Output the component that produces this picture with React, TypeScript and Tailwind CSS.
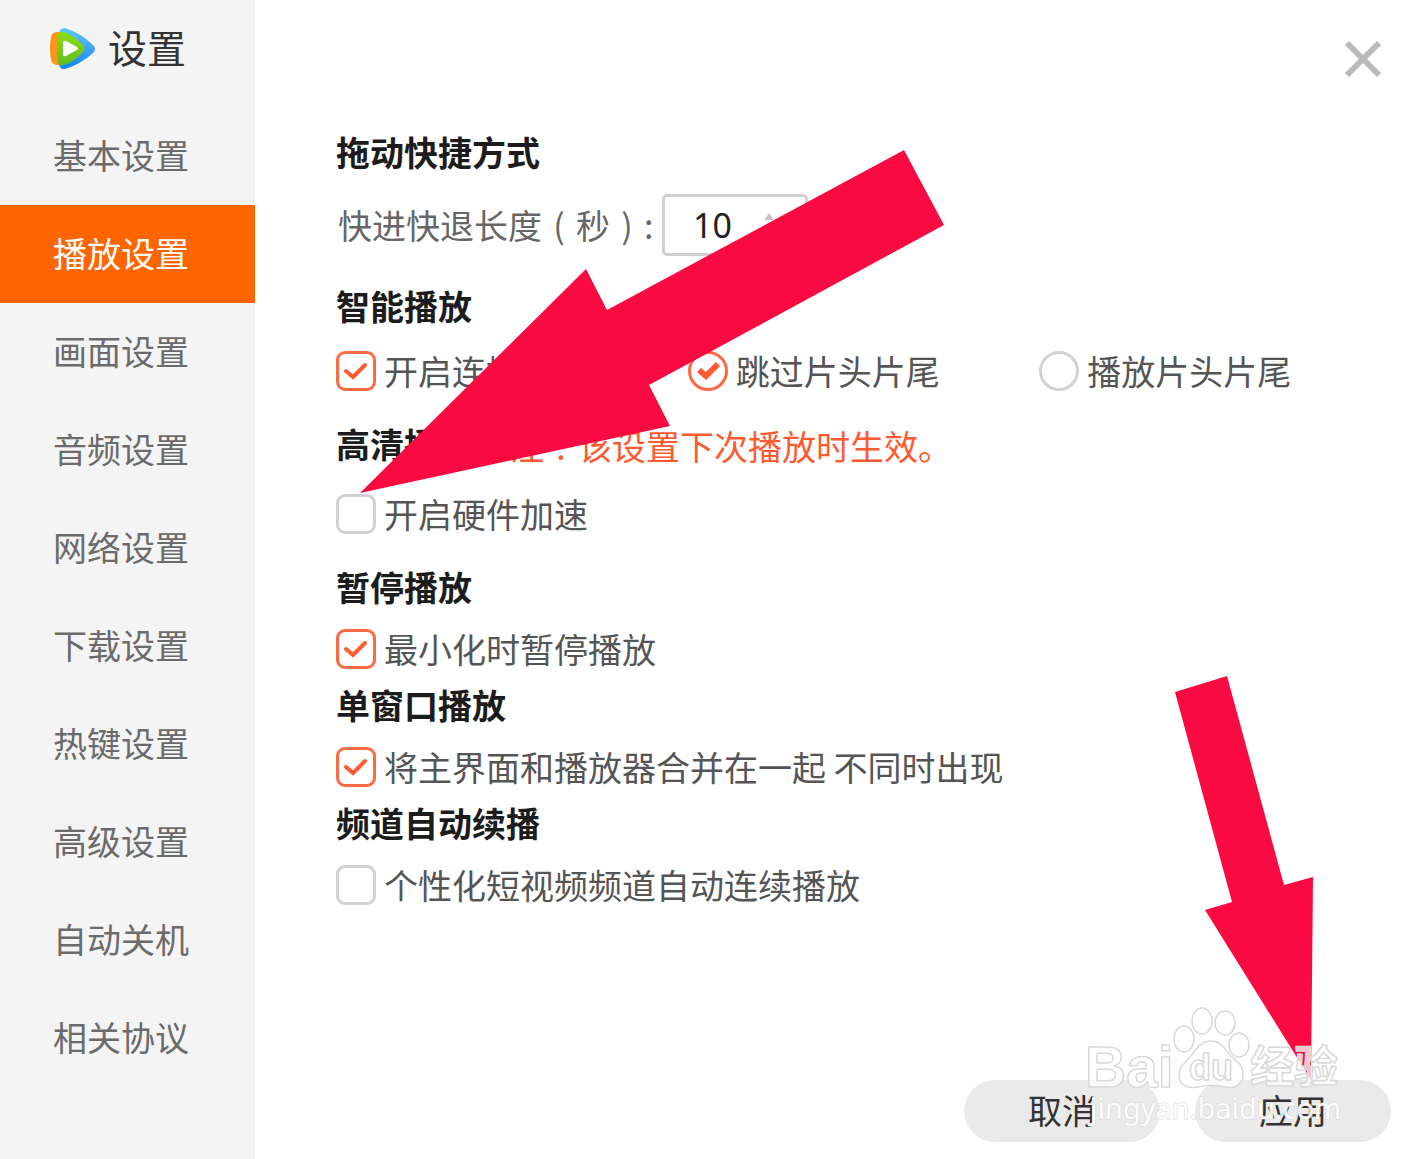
import { useState, type ReactNode } from "react";

const menu = [
  "基本设置",
  "播放设置",
  "画面设置",
  "音频设置",
  "网络设置",
  "下载设置",
  "热键设置",
  "高级设置",
  "自动关机",
  "相关协议",
];

function Logo() {
  return (
    <svg viewBox="0 0 46 42" className="h-[42px] w-[46px]" aria-hidden="true">
      <defs>
        <linearGradient id="logo-blue" x1="0" y1="0" x2="0" y2="1">
          <stop offset="0" stopColor="#5ccbfb" />
          <stop offset="0.5" stopColor="#3fa2f7" />
          <stop offset="1" stopColor="#0f86f2" />
        </linearGradient>
        <linearGradient id="logo-green" x1="0" y1="0" x2="0" y2="1">
          <stop offset="0" stopColor="#8fdc12" />
          <stop offset="1" stopColor="#62bd1c" />
        </linearGradient>
      </defs>
      <path d="M1 9Q2 4 8 4L14 4V37L8 37Q2 37 1 32Q-1 20 1 9Z" fill="#ff9518" />
      <path
        d="M9 5Q10 0 15 0Q31 5 43 17Q47 21 43 25Q31 36 15 41Q10 42 9 36Q6 21 9 5Z"
        fill="url(#logo-blue)"
      />
      <path
        d="M8 6Q10 3 14 4Q25 8 33 17Q36 21 33 24Q25 33 14 37Q10 38 8 35Q6 21 8 6Z"
        fill="url(#logo-green)"
      />
      <path
        d="M13 15Q13 12 16 13L27 19Q29 21 27 22L16 28Q13 29 13 26Z"
        fill="#fff"
      />
    </svg>
  );
}

type OptionProps = {
  label: string;
  type?: "checkbox" | "radio";
  name?: string;
  defaultChecked?: boolean;
};

function Option({
  label,
  type = "checkbox",
  name,
  defaultChecked,
}: OptionProps) {
  const radio = type === "radio";
  return (
    <label className="flex items-center gap-2 text-[34px] leading-10 text-[#555]">
      <span className="grid size-10 shrink-0">
        <input
          type={type}
          name={name}
          defaultChecked={defaultChecked}
          className={`peer col-start-1 row-start-1 size-10 appearance-none border-3 border-[#d2d2d2] bg-white checked:border-[#ff6a45] ${
            radio ? "rounded-full" : "rounded-[9px]"
          }`}
        />
        <svg
          viewBox="0 0 40 40"
          fill="none"
          stroke="#ff5a30"
          strokeWidth={radio ? 6 : 4}
          className="pointer-events-none invisible col-start-1 row-start-1 size-10 peer-checked:visible"
          aria-hidden="true"
        >
          <path
            d={radio ? "M11 19L18 25L30 13" : "M10 20L17 26L29 14"}
            strokeLinecap={radio ? "butt" : "round"}
          />
        </svg>
      </span>
      <span>{label}</span>
    </label>
  );
}

function Heading({ children }: { children: ReactNode }) {
  return (
    <h2 className="pb-1 text-[34px] leading-9 font-bold text-[#1c1c1c]">
      {children}
    </h2>
  );
}

// Full-width cell with its mark in the middle
function Mark({ children }: { children: string }) {
  return (
    <span className="inline-block w-[34px] text-center">{children}</span>
  );
}

function Watermark() {
  return (
    <svg
      viewBox="0 0 260 130"
      className="pointer-events-none absolute right-[73px] bottom-[26px] h-[130px] w-[260px]"
      aria-hidden="true"
    >
      <g
        fill="#fff"
        fillOpacity="0.75"
        stroke="#d9d9d9"
        strokeWidth="1.5"
        strokeLinejoin="round"
      >
        <ellipse cx="100" cy="36" rx="10" ry="13" />
        <ellipse cx="118" cy="18" rx="10" ry="13" />
        <ellipse cx="141" cy="20" rx="10" ry="12" />
        <ellipse cx="155" cy="42" rx="10" ry="12" />
        <path d="M127 38C138 38 141 47 147 53C154 59 160 63 159 73C158 82 150 86 141 84C132 82 123 82 114 84C104 86 95 82 95 73C95 63 101 60 107 53C112 47 116 38 127 38Z" />
        <text
          x="1"
          y="84"
          className="font-['Liberation_Sans'] text-[57px] font-bold"
        >
          Bai
        </text>
        <text
          x="105"
          y="77"
          className="font-['Liberation_Sans'] text-[36px] font-bold"
        >
          du
        </text>
        <text
          x="166"
          y="80"
          className="font-['Noto_Sans_CJK_SC'] text-[44px] font-bold"
        >
          经验
        </text>
      </g>
      <text
        x="6"
        y="116"
        fill="#fff"
        fillOpacity="0.9"
        stroke="#d9d9d9"
        strokeWidth="1"
        paintOrder="stroke"
        className="font-['Noto_Sans'] text-[29px]"
      >
        jingyan.baidu.com
      </text>
    </svg>
  );
}

export default function App() {
  const [active, setActive] = useState("播放设置");
  const [seconds, setSeconds] = useState("10");

  return (
    <div className="relative flex min-h-screen bg-white font-['Noto_Sans_CJK_SC',sans-serif]">
      <aside className="w-[255px] shrink-0 bg-[#f4f4f4]">
        <div className="flex h-[107px] items-start gap-3 pt-7 pl-[50px]">
          <Logo />
          <h1 className="text-[39px] leading-9 text-[#333]">设置</h1>
        </div>
        <nav>
          {menu.map((item) => (
            <button
              key={item}
              type="button"
              onClick={() => setActive(item)}
              className={`block h-[98px] w-full pb-1 pl-[53px] text-left text-[34px] ${
                item === active ? "bg-[#ff6600] text-white" : "text-[#6b6b6b]"
              }`}
            >
              {item}
            </button>
          ))}
        </nav>
      </aside>

      <main className="flex flex-1 flex-col pr-[26px] pb-[17px] pl-[81px]">
        <div className="flex h-[134px] justify-end pt-10 pr-2">
          <button type="button" aria-label="关闭" className="size-10">
            <svg
              viewBox="0 0 40 40"
              stroke="#bababa"
              strokeWidth="6"
              className="size-10"
            >
              <path d="M4 3L36 35M36 3L4 35" />
            </svg>
          </button>
        </div>

        <section>
          <Heading>拖动快捷方式</Heading>
          <div className="mt-5 flex h-[62px] items-center">
            <label
              htmlFor="step"
              className="w-[326px] pl-[2px] text-[34px] leading-10 whitespace-nowrap text-[#666]"
            >
              快进快退长度<Mark>(</Mark>秒<Mark>)</Mark>:
            </label>
            <div className="relative">
              <input
                id="step"
                type="text"
                inputMode="numeric"
                value={seconds}
                onChange={(e) => setSeconds(e.target.value)}
                className="h-[62px] w-[146px] rounded-[5px] border-3 border-[#d0d0d0] pl-7 font-['Noto_Sans'] text-[34px] text-[#222]"
              />
              <svg
                viewBox="0 0 20 40"
                fill="#c4c4c4"
                className="pointer-events-none absolute top-3 right-7 h-10 w-5"
                aria-hidden="true"
              >
                <path d="M4 14L9 7L14 14ZM4 26L9 33L14 26Z" />
              </svg>
            </div>
          </div>
        </section>

        <section className="mt-8">
          <Heading>智能播放</Heading>
          <div className="mt-[23px] grid grid-cols-3">
            <Option label="开启连播" defaultChecked />
            <Option
              type="radio"
              name="intro"
              label="跳过片头片尾"
              defaultChecked
            />
            <Option type="radio" name="intro" label="播放片头片尾" />
          </div>
        </section>

        <section className="mt-[35px]">
          <div className="flex items-center gap-[38px]">
            <Heading>高清播放</Heading>
            <p className="text-[34px] leading-10 text-[#ff5a30]">
              注<Mark>:</Mark>该设置下次播放时生效。
            </p>
          </div>
          <div className="mt-7">
            <Option label="开启硬件加速" />
          </div>
        </section>

        <section className="mt-[35px]">
          <Heading>暂停播放</Heading>
          <div className="mt-5">
            <Option label="最小化时暂停播放" defaultChecked />
          </div>
        </section>

        <section className="mt-[18px]">
          <Heading>单窗口播放</Heading>
          <div className="mt-5">
            <Option
              label="将主界面和播放器合并在一起 不同时出现"
              defaultChecked
            />
          </div>
        </section>

        <section className="mt-[18px]">
          <Heading>频道自动续播</Heading>
          <div className="mt-5">
            <Option label="个性化短视频频道自动连续播放" />
          </div>
        </section>

        <footer className="mt-auto flex justify-end gap-[35px] pt-8">
          <button
            type="button"
            className="h-[62px] w-[196px] rounded-full bg-[#eaeaea] pb-1 text-[34px] text-[#333]"
          >
            取消
          </button>
          <button
            type="button"
            className="h-[62px] w-[196px] rounded-full bg-[#eaeaea] pb-1 text-[34px] text-[#333]"
          >
            应用
          </button>
        </footer>
      </main>

      {/* Pointer to the hardware acceleration box */}
      <svg
        viewBox="0 0 584 343"
        fill="#f90a40"
        className="pointer-events-none absolute top-[150px] left-[360px] h-[343px] w-[584px]"
        aria-hidden="true"
      >
        <path d="M544 0L584 75L289 235L310 276L0 343L226 119L247 160Z" />
      </svg>

      {/* Pointer to the apply button */}
      <svg
        viewBox="0 0 138 404"
        fill="#f90a40"
        className="pointer-events-none absolute right-[104px] bottom-[79px] h-[404px] w-[138px]"
        aria-hidden="true"
      >
        <path d="M0 16L52 0L109 209L138 201L136 404L30 234L57 226Z" />
      </svg>

      <Watermark />
    </div>
  );
}
